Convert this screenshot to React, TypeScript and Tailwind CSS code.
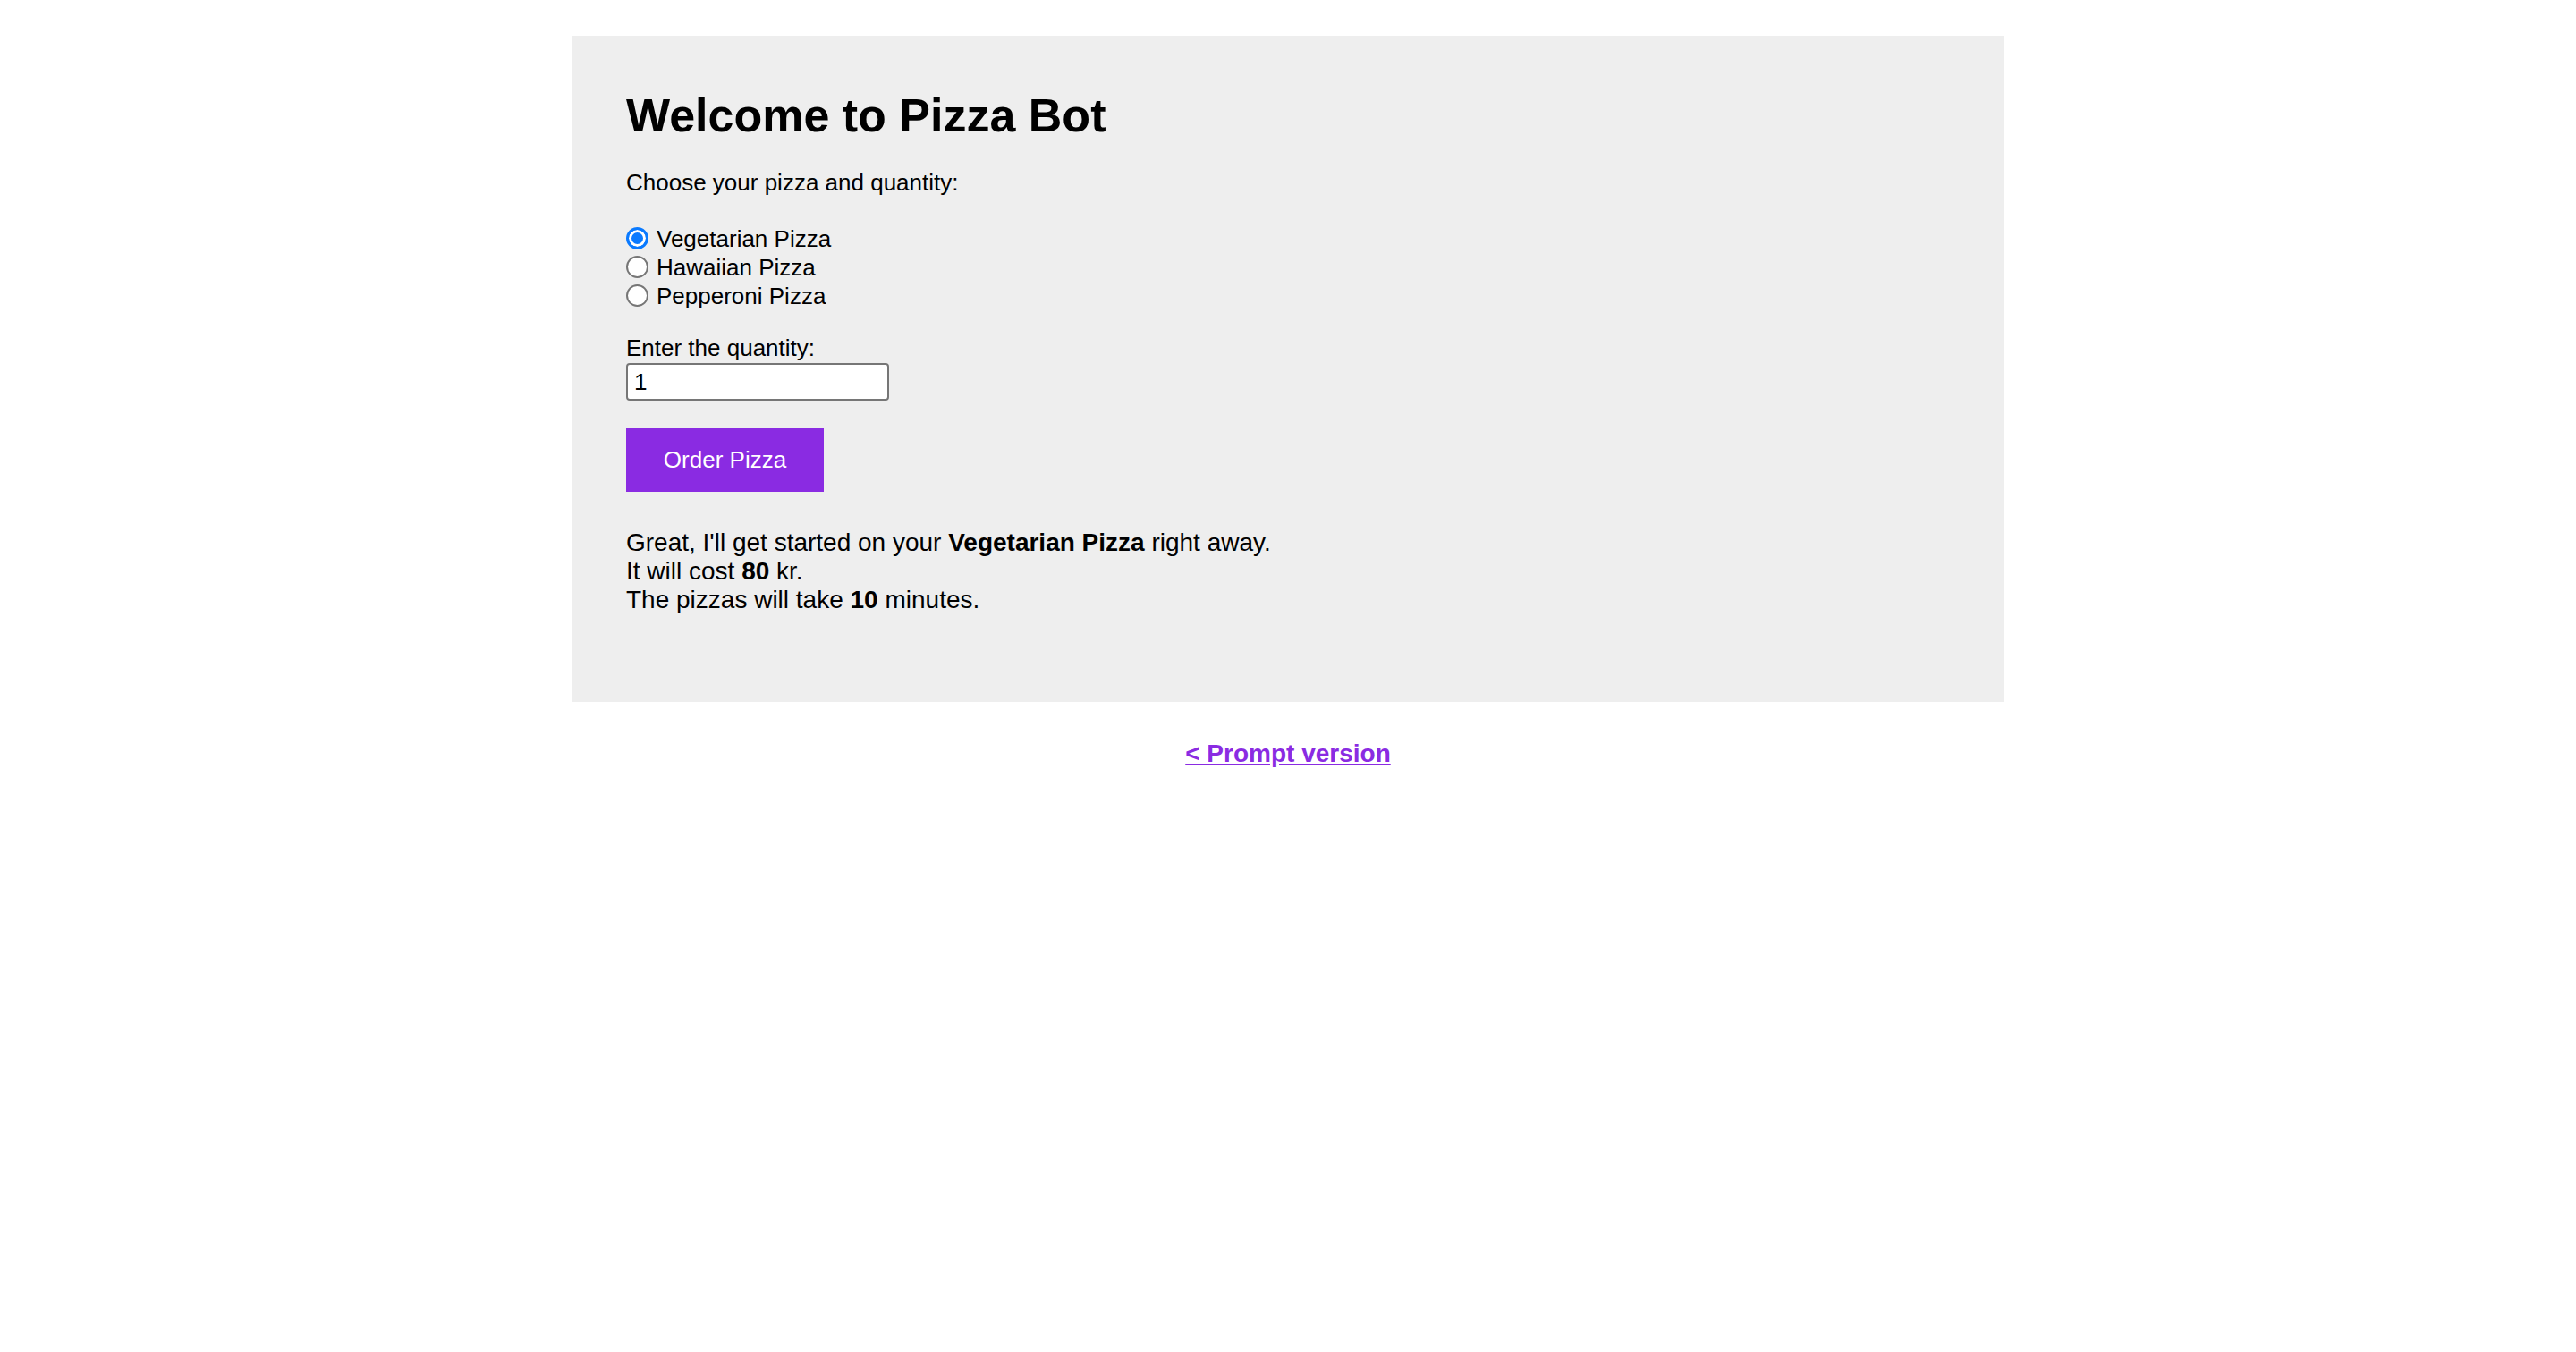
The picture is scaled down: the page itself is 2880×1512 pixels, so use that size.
import { useState } from "react";

const pizzas = [
  { id: "vegetarian", name: "Vegetarian Pizza", price: 80, time: 10 },
  { id: "hawaiian", name: "Hawaiian Pizza", price: 90, time: 12 },
  { id: "pepperoni", name: "Pepperoni Pizza", price: 100, time: 15 },
];

export default function App() {
  const [choice, setChoice] = useState("vegetarian");
  const [qty, setQty] = useState("1");
  const [order, setOrder] = useState({ id: "vegetarian", qty: 1 });

  const ordered = pizzas.find((p) => p.id === order.id)!;

  return (
    <div className="min-h-screen bg-white text-black font-['Liberation_Sans',Arial,sans-serif] text-[26px] leading-[31px]">
      <div className="w-[1600px] mx-auto mt-[40px] bg-[#eeeeee] pl-[60px] pt-[59px] pb-[98px]">
        <h1 className="text-[52px] leading-[60px] font-bold">Welcome to Pizza Bot</h1>

        <p className="mt-[30px]">Choose your pizza and quantity:</p>

        {/* pizza options */}
        <div className="mt-[31px] flex flex-col">
          {pizzas.map((p) => (
            <label key={p.id} className="flex items-center h-[32px] leading-[32px] cursor-pointer">
              <input
                type="radio"
                name="pizza"
                checked={choice === p.id}
                onChange={() => setChoice(p.id)}
                className="appearance-none w-[25px] h-[25px] -mt-[2px] rounded-full border-2 border-[#767676] bg-white checked:border-[3px] checked:border-[#0a7aff] checked:bg-[#0a7aff] checked:shadow-[inset_0_0_0_3px_white]"
              />
              <span className="ml-[9px]">{p.name}</span>
            </label>
          ))}
        </div>

        <div className="mt-[27px]">Enter the quantity:</div>
        <input
          type="text"
          value={qty}
          onChange={(e) => setQty(e.target.value)}
          className="block mt-[1px] w-[294px] h-[42px] px-[7px] rounded-[4px] border-2 border-[#767676] bg-white text-[26px] outline-none"
        />

        <button
          onClick={() => setOrder({ id: choice, qty: Number(qty) || 1 })}
          className="block mt-[31px] w-[221px] h-[71px] bg-[#8a2be2] text-white text-[26px]"
        >
          Order Pizza
        </button>

        <div className="mt-[41px] text-[28px] leading-[32px]">
          <div>
            Great, I'll get started on your <b>{ordered.name}</b> right away.
          </div>
          <div>
            It will cost <b>{ordered.price * order.qty}</b> kr.
          </div>
          <div>
            The pizzas will take <b>{ordered.time}</b> minutes.
          </div>
        </div>
      </div>

      <div className="text-center mt-[42px] text-[28px] leading-[32px]">
        <a href="#" className="font-bold text-[#8a2be2] underline">
          &lt; Prompt version
        </a>
      </div>
    </div>
  );
}
